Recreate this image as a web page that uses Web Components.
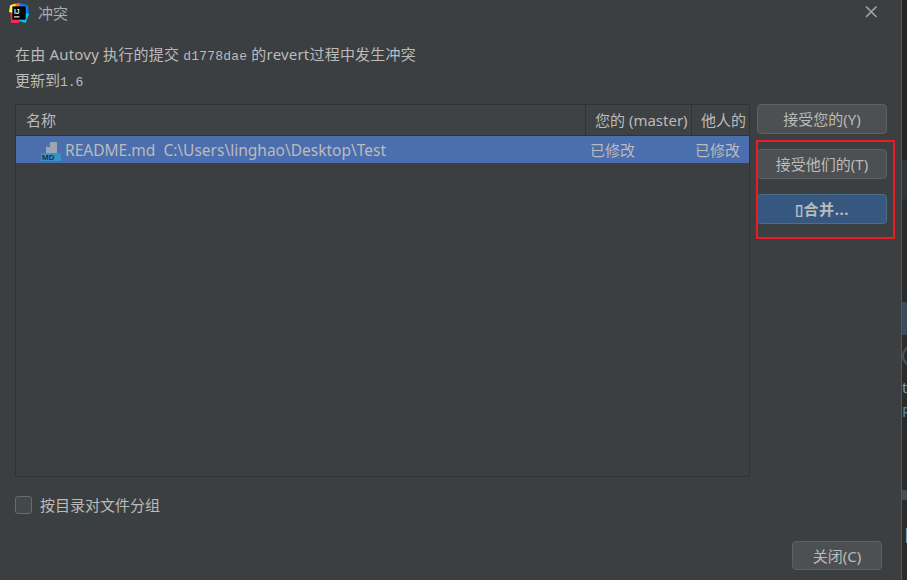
<!DOCTYPE html>
<html lang="zh">
<head>
<meta charset="utf-8">
<title>冲突</title>
<style>
  html, body { margin: 0; height: 100%; background: #2b2b2b; overflow: hidden; }
  body { font-family: "Noto Sans", "Noto Sans CJK SC", sans-serif; font-size: 15px; color: #bbbbbb; }
  .mono { font-family: "Liberation Mono", "Noto Sans CJK SC", monospace; font-size: 13px; }
</style>
</head>
<body>
<desk-top>
  <conflict-dialog>
    <dialog-title slot="title">冲突</dialog-title>
    <span slot="message" style="letter-spacing:.2px">在由 Autovy 执行的提交 <span class="mono">d1778dae</span> 的revert过程中发生冲突</span>
    <span slot="message">更新到<span class="mono">1.6</span></span>
    <conflict-table slot="table"></conflict-table>
    <ui-button slot="actions">接受您的(Y)</ui-button>
    <ui-button slot="actions" style="margin-top:15px">接受他们的(T)</ui-button>
    <ui-button slot="actions" style="margin-top:15px;letter-spacing:.6px" primary>▯合并...</ui-button>
    <ui-checkbox slot="option">按目录对文件分组</ui-checkbox>
    <ui-button slot="close" style="width:90px;height:29px">关闭(C)</ui-button>
  </conflict-dialog>
  <back-strip></back-strip>
</desk-top>

<script>
class DeskTop extends HTMLElement {
    constructor() {
        super();
        const shadowRoot = this.attachShadow({ mode: 'open' });
        shadowRoot.innerHTML = `
        <style>
            :host { display: flex; width: 907px; height: 580px; overflow: hidden; }
        </style>
        <slot></slot>`;
    }
}
customElements.define('desk-top', DeskTop);

class DialogTitle extends HTMLElement {
    constructor() {
        super();
        const shadowRoot = this.attachShadow({ mode: 'open' });
        shadowRoot.innerHTML = `
        <style>
            :host { display: flex; align-items: center; height: 26px; padding-left: 9px; font-size: 15px; color: #a9adaf; }
            .logo { width: 20px; height: 20px; margin-right: 9px; flex: none; }
            .name { flex: 1; }
            .close { width: 16px; height: 16px; margin: -2px 22px 0 0; }
        </style>
        <svg class="logo" viewBox="0 0 18 18">
            <polygon points="3,1 10,0 9,9 1,7" fill="#f97a12"/>
            <polygon points="9,0 17,2 18,12 11,9" fill="#087cfa"/>
            <polygon points="11,8 18,10 15,18 8,16" fill="#07c3f2"/>
            <polygon points="1,6 8,9 9,18 2,18" fill="#fe2857"/>
            <polygon points="1,2 6,1 4,9 0,8" fill="#fcf84a"/>
            <rect x="3" y="3" width="12" height="12" fill="#000"/>
            <text x="4.5" y="9.5" font-family="Liberation Sans, sans-serif" font-size="6" font-weight="700" fill="#fff">IJ</text>
            <rect x="4.5" y="12" width="5" height="1" fill="#fff"/>
        </svg>
        <span class="name"><slot></slot></span>
        <svg class="close" viewBox="0 0 16 16">
            <path d="M3 2.5 L13.5 13 M13.5 2.5 L3 13" stroke="#a2a6a8" stroke-width="1.6" fill="none"/>
        </svg>`;
    }
}
customElements.define('dialog-title', DialogTitle);

class ConflictDialog extends HTMLElement {
    constructor() {
        super();
        const shadowRoot = this.attachShadow({ mode: 'open' });
        shadowRoot.innerHTML = `
        <style>
            :host {
                display: flex; flex-direction: column; position: relative; box-sizing: border-box;
                width: 902px; height: 580px; flex: none; background: #3c3f41;
                border-right: 1px solid #55585a; line-height: 20px;
            }
            .message { display: flex; flex-direction: column; gap: 3px; box-sizing: border-box; padding: 18px 15px 0; height: 78px; }
            .main { display: flex; padding-left: 15px; gap: 7px; height: 373px; }
            .actions { display: flex; flex-direction: column; width: 130px; }
            .option { padding: 18px 0 0 15px; height: 46px; }
            .footer { display: flex; justify-content: flex-end; padding-right: 19px; margin-top: 0; }
            .mark {
                position: absolute; left: 756px; top: 140px; width: 139px; height: 99px;
                box-sizing: border-box; border: 2px solid #ed1c24; pointer-events: none;
            }
        </style>
        <slot name="title"></slot>
        <div class="message"><slot name="message"></slot></div>
        <div class="main">
            <slot name="table"></slot>
            <div class="actions"><slot name="actions"></slot></div>
        </div>
        <div class="option"><slot name="option"></slot></div>
        <div class="footer"><slot name="close"></slot></div>
        <div class="mark"></div>`;
    }
}
customElements.define('conflict-dialog', ConflictDialog);

class ConflictTable extends HTMLElement {
    constructor() {
        super();
        const shadowRoot = this.attachShadow({ mode: 'open' });
        shadowRoot.innerHTML = `
        <style>
            :host {
                display: block; box-sizing: border-box; width: 735px; height: 373px;
                border: 1px solid #323232; background: #3c3f41;
            }
            .head, .row { display: grid; grid-template-columns: 569px 106px 1fr; }
            .head { height: 30px; background: #3e4244; border-bottom: 1px solid #323232; align-items: center; }
            .head div { height: 30px; line-height: 31px; padding-left: 9px; box-sizing: border-box; overflow: hidden; white-space: nowrap; }
            .head div:first-child { padding-left: 10px; }
            .head div + div { border-left: 1px solid #323232; }
            .row { height: 27px; background: #4b6eaf; align-items: center; line-height: 29px; }
            .file { display: flex; align-items: center; padding-left: 25px; white-space: pre; font-size: 15.5px; }
            .file svg { width: 20px; height: 20px; margin-right: 4px; flex: none; }
            .state { padding-left: 5px; }
            .state:last-child { padding-left: 4px; }
        </style>
        <div class="head">
            <div>名称</div>
            <div>您的 (master)</div>
            <div>他人的</div>
        </div>
        <div class="row">
            <div class="file">
                <svg viewBox="0 0 20 20">
                    <polygon points="5,6 10,1 16,1 16,12 5,12" fill="#9aa7b0"/>
                    <polygon points="5,6 9,6 9,2" fill="#4b6eaf"/>
                    <rect x="0" y="12" width="20" height="8" fill="#3592c4"/>
                    <text x="1" y="19" font-family="Liberation Sans, sans-serif" font-size="8" font-weight="700" fill="#23303a">MD</text>
                </svg>
                <span>README.md  C:\\Users\\linghao\\Desktop\\Test</span>
            </div>
            <div class="state">已修改</div>
            <div class="state">已修改</div>
        </div>`;
    }
}
customElements.define('conflict-table', ConflictTable);

class UiButton extends HTMLElement {
    constructor() {
        super();
        const shadowRoot = this.attachShadow({ mode: 'open' });
        shadowRoot.innerHTML = `
        <style>
            :host {
                display: flex; align-items: center; justify-content: center; box-sizing: border-box;
                height: 30px; border: 1px solid #5e6163; border-radius: 4px; background: #4c5052; color: #bbbbbb;
            }
            :host([primary]) { background: #365880; border-color: #4c708c; font-weight: 700; }
        </style>
        <slot></slot>`;
    }
}
customElements.define('ui-button', UiButton);

class UiCheckbox extends HTMLElement {
    constructor() {
        super();
        const shadowRoot = this.attachShadow({ mode: 'open' });
        shadowRoot.innerHTML = `
        <style>
            :host { display: flex; align-items: center; gap: 8px; height: 20px; }
            .box { width: 17px; height: 18px; box-sizing: border-box; border: 1px solid #6b6b6b; border-radius: 3px; background: #43494a; }
        </style>
        <div class="box"></div>
        <slot></slot>`;
    }
}
customElements.define('ui-checkbox', UiCheckbox);

class BackStrip extends HTMLElement {
    constructor() {
        super();
        const shadowRoot = this.attachShadow({ mode: 'open' });
        shadowRoot.innerHTML = `
        <style>
            :host { display: flex; flex-direction: column; width: 5px; height: 580px; flex: none; overflow: hidden; background: #2b2b2b; font-size: 15px; line-height: 18px; }
            div { flex: none; white-space: nowrap; overflow: hidden; }
            .ring { width: 22px; height: 22px; box-sizing: border-box; border: 2px solid #505254; border-radius: 50%; }
        </style>
        <div style="height:160px;background:#262626"></div>
        <div style="height:39px;background:#313335"></div>
        <div style="height:103px;background:#2b2b2b"></div>
        <div style="height:33px;background:#3b4b5c"></div>
        <div style="height:10px;background:#2b2b2b"></div>
        <div class="ring"></div>
        <div style="height:11px"></div>
        <div style="height:18px;color:#6f9fb5">t</div>
        <div style="height:6px"></div>
        <div style="height:18px;color:#5a84a8">R</div>
        <div style="height:70px"></div>
        <div style="height:10px;background:#4a4c4e"></div>
        <div style="height:25px"></div>
        <div style="height:18px;color:#8fa9c5;font-size:17px">||</div>`;
    }
}
customElements.define('back-strip', BackStrip);
</script>
</body>
</html>
